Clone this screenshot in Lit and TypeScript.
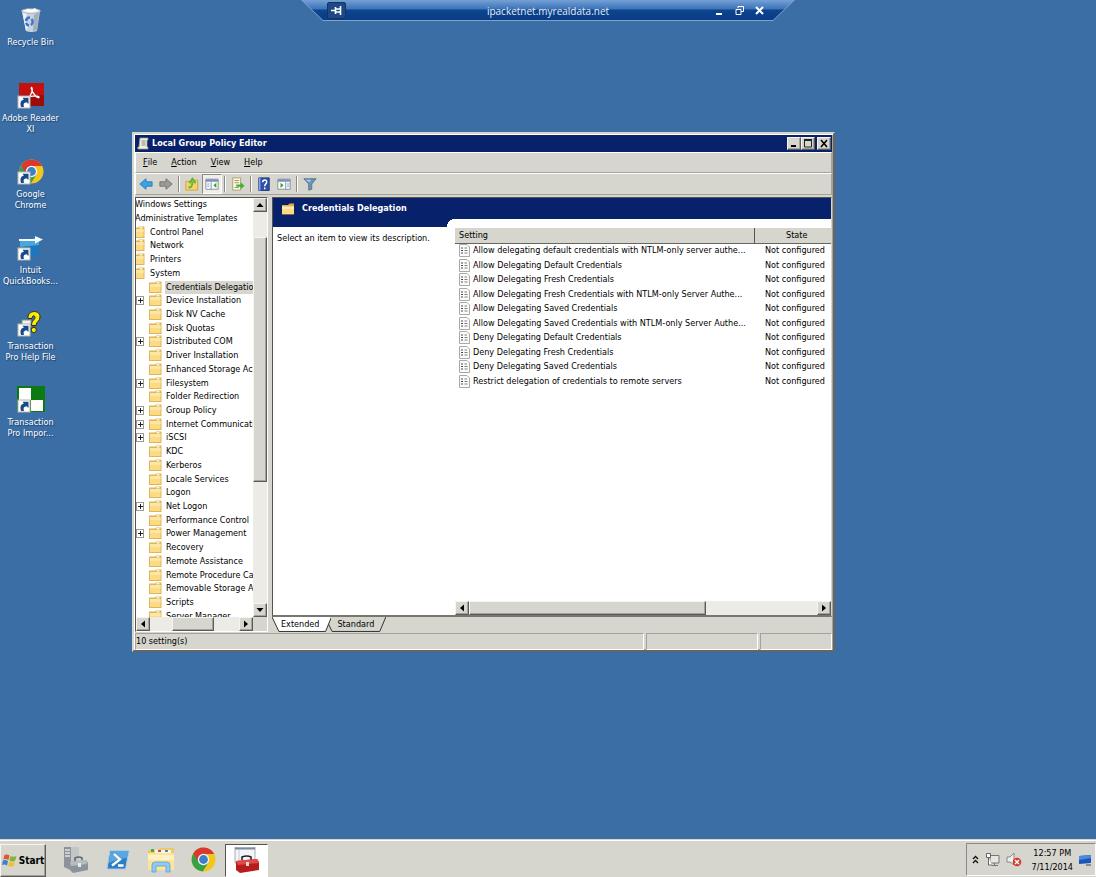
import { LitElement, html, svg, css, nothing } from "lit";
import { customElement, property, state } from "lit/decorators.js";
import { classMap } from "lit/directives/class-map.js";

const resets = css`
  * { box-sizing: border-box; }
  button {
    font: inherit; color: inherit; margin: 0; padding: 0; border: 0;
    background: none; display: flex; align-items: center; justify-content: center;
  }
  ul { list-style: none; margin: 0; padding: 0; }
  svg { display: block; }
`;

const bevel = css`
  .raised {
    background: #d6d5ce;
    border: 1px solid;
    border-color: #f4f4f0 #5c5b58 #5c5b58 #f4f4f0;
    box-shadow: inset -1px -1px #a3a29c;
  }
`;

const shortcutArrow = svg`
  <rect x="0" y="13" width="12" height="12" fill="#fff" stroke="#b9b4ac" stroke-width="1"/>
  <path d="M3 24C1.500 19 3.500 16.800 6 16.800L4.500 14.800H10.500V21L8.600 19.300C6 19.500 5 21 6 24Z" fill="#174a8c"/>`;

const chromeMark = svg`
  <circle cx="12.5" cy="12.5" r="12" fill="#f4c61d"/>
  <path d="M12.5 12.5L2.2 6.5A12 12 0 0 0 11.8 24.5L17.5 15.5Z" fill="#35a24a"/>
  <path d="M2.2 6.5A12 12 0 0 1 23.2 7H12.5L7.6 15.2Z" fill="#d9392f"/>
  <circle cx="12.5" cy="12.5" r="5.7" fill="#f5f5f2"/>
  <circle cx="12.5" cy="12.5" r="4.4" fill="#3f7fc9"/>`;

const folderIcon = html`<svg width="13" height="13" viewBox="0 0 13 13" aria-hidden="true">
  <path d="M0 1.500H6L7 .5H12.500V12H0Z" fill="#dfb558"/>
  <path d="M1 3H11.500V11H1Z" fill="#fbdc84"/>
  <path d="M1 3H11.500V6H1Z" fill="#fde7a2"/>
  <rect x="7.500" y="1" width="3" height="1.500" fill="#fff6d8"/>
</svg>`;

const bigFolder = html`<svg width="14" height="12" viewBox="0 0 14 12" aria-hidden="true">
  <path d="M1 2H7L8.500 .5H13V11.500H1Z" fill="#dcae4a"/>
  <path d="M1 3.500H13V11H1Z" fill="#fbdb80"/><path d="M1 3.500H13V6H1Z" fill="#fdeab0"/>
</svg>`;

const settingIcon = html`<svg width="11" height="13" viewBox="0 0 11 13" aria-hidden="true">
  <path d="M.5 .5H8L10.500 3V12.500H.5Z" fill="#fbfbfb" stroke="#a9a9a6"/>
  <path d="M2 4H4M2 6.500H4M2 9H4" stroke="#444a55" stroke-width="1.2"/>
  <path d="M5.500 4H8M5.500 6.500H8.500M5.500 9H8.500" stroke="#7d7d7d"/>
</svg>`;

const deskIcons: Record<string, unknown> = {
  bin: svg`
    <path d="M4 4L22 4L19 24Q13 26 8 24Z" fill="#c9d3dc"/>
    <path d="M4 4L9 7L7 14L10 20L8 24Z" fill="#eef2f5"/>
    <path d="M16 8L21 5L19 23L15 24Z" fill="#a3b0bc"/>
    <ellipse cx="13" cy="4" rx="9.500" ry="2.300" fill="#e7edf1" stroke="#98a6b2" stroke-width=".8"/>
    <path d="M6 4L10 1.500L13 3L17 1L20 4L13 5.500Z" fill="#fff"/>
    <path d="M8 14A4 4 0 0 1 12 10.500M13.500 12A4 4 0 0 1 13 18M11 18.500A4 4 0 0 1 8 16" fill="none" stroke="#3a76d0" stroke-width="2.400"/>`,
  adobe: svg`
    <rect x="1" y="0" width="25" height="23" fill="#c4110f"/>
    <rect x="1" y="12" width="25" height="11" fill="#9d0b0b"/>
    <path d="M13 4.500C15 4 14.300 9 12.500 12S8.500 17.500 8.500 15.500S20.500 11.500 21 14S14.500 12 13 4.500" fill="none" stroke="#fff" stroke-width="1.3"/>
    ${shortcutArrow}`,
  chrome: svg`<g transform="translate(1 0)">${chromeMark}</g>${shortcutArrow}`,
  quick: svg`
    <path d="M2 5L21 3V20L9 24L2 22Z" fill="#1c78bd"/>
    <path d="M2 5L21 3V10L2 12Z" fill="#4ba6dd"/>
    <path d="M1 4H17V1L25 4.500L17 8.500V6H1Z" fill="#f8fcff"/>
    ${shortcutArrow}`,
  help: svg`
    <path d="M4 9H13V16H4Z" fill="#f2f2ee" stroke="#8c8c88"/>
    <path d="M10 7.500C9 -1.500 22.500 -1.500 22 6C22 10.500 18 10.500 18 14.500H13.500C13.500 9.500 17 9 17 6.500C17 4 14 4 14 7.500Z" fill="#fbe90a" stroke="#2d2b12"/>
    <circle cx="15.800" cy="19" r="2.600" fill="#fbe90a" stroke="#2d2b12"/>
    ${shortcutArrow}`,
  transfer: svg`
    <rect x="-1" y="-1" width="28" height="26" fill="#0c7a12"/>
    <rect x="1" y="1" width="12" height="12" fill="#fff"/>
    <rect x="13" y="13" width="12" height="11" fill="#fff"/>
    ${shortcutArrow}`,
};

const shortcuts: Array<[string, string[]]> = [
  ["bin", ["Recycle Bin"]],
  ["adobe", ["Adobe Reader", "XI"]],
  ["chrome", ["Google", "Chrome"]],
  ["quick", ["Intuit", "QuickBooks..."]],
  ["help", ["Transaction", "Pro Help File"]],
  ["transfer", ["Transaction", "Pro Impor..."]],
];

@customElement("desktop-shortcuts")
class DesktopShortcuts extends LitElement {
  static styles = [resets, css`
    :host { display: block; color: #fff; width: 61px; }
    .list { display: grid; grid-auto-rows: 76px; padding-top: 7px; }
    .shortcut { display: flex; flex-direction: column; align-items: center; gap: 5px; width: 100%; justify-content: flex-start; text-align: center; }
    .label { line-height: 11px; white-space: nowrap; text-shadow: 1px 1px 1px #1d3f68; }
    .line { display: block; }
    .pic { overflow: visible; }
  `];
  render() {
    return html`<ul class="list">${shortcuts.map(([icon, lines]) => html`
      <li><button class="shortcut">
        <svg class="pic" width="25" height="25" viewBox="0 0 25 25" aria-hidden="true">${deskIcons[icon]}</svg>
        <span class="label">${lines.map((l) => html`<span class="line">${l}</span>`)}</span>
      </button></li>`)}</ul>`;
  }
}

@customElement("connection-bar")
class ConnectionBar extends LitElement {
  static styles = [resets, css`
    :host { display: block; color: #e4edf8; }
    .rim {
      background: #7fa3cc; padding-bottom: 1px;
      clip-path: polygon(0 0, 100% 0, calc(100% - 22px) 100%, 22px 100%);
    }
    .bar {
      height: 20px; padding: 0 26px;
      display: grid; grid-template-columns: 1fr auto 1fr; align-items: center;
      clip-path: polygon(1px 0, calc(100% - 1px) 0, calc(100% - 22px) 100%, 22px 100%);
      background: linear-gradient(#74a0d6, #3c73b8 45%, #0c458f 50%, #0a3c84);
    }
    .pin { width: 19px; height: 17px; background: #1d4a85; border: 1px solid #15345f; border-radius: 2px; }
    .name { font: 10px/14px "Open Sans", "Noto Sans", sans-serif; padding-top: 2px; }
    .controls { display: flex; justify-content: flex-end; gap: 9px; padding-right: 4px; }
    .ctl { width: 11px; height: 12px; }
  `];
  render() {
    return html`<div class="rim"><div class="bar">
      <button class="pin" aria-label="Pin"><svg width="11" height="9" viewBox="0 0 11 9"><path d="M0 4.500H4M4.500 1V8M4.500 3H9M4.500 6H9M9.500 0V9" stroke="#fff" stroke-width="1.600" fill="none"/></svg></button>
      <span class="name">ipacketnet.myrealdata.net</span>
      <div class="controls">
        <button class="ctl" aria-label="Minimize"><svg width="11" height="11" viewBox="0 0 11 11"><path d="M2 9H8" stroke="#fff" stroke-width="2"/></svg></button>
        <button class="ctl" aria-label="Restore"><svg width="11" height="11" viewBox="0 0 11 11"><path d="M4 3V1.500H9.500V6.500H7M2 4.500H7V9.500H2Z" stroke="#fff" fill="none"/></svg></button>
        <button class="ctl" aria-label="Close"><svg width="11" height="11" viewBox="0 0 11 11"><path d="M2 2L9 9M9 2L2 9" stroke="#fff" stroke-width="2"/></svg></button>
      </div>
    </div></div>`;
  }
}

@customElement("scroll-bar")
class ScrollBar extends LitElement {
  @property({ reflect: true }) direction: "vertical" | "horizontal" = "vertical";
  @property({ type: Number }) start = 0;
  @property({ type: Number }) size = 50;
  static styles = [resets, bevel, css`
    :host { display: flex; background: #ecebe6; color: #000; }
    :host([direction="vertical"]) { flex-direction: column; width: 14px; }
    :host([direction="horizontal"]) { height: 14px; }
    .arrow { width: 14px; height: 14px; flex: none; }
    .track { flex: 1; display: flex; flex-direction: inherit; min-width: 0; min-height: 0; }
    .thumb { flex: none; }
  `];
  render() {
    const v = this.direction === "vertical";
    const side = v ? "height" : "width";
    return html`
      <button class="arrow raised" aria-label=${v ? "Scroll up" : "Scroll left"}>
        <svg width="8" height="8" viewBox="0 0 8 8"><path d=${v ? "M0.500 6L4 2L7.500 6Z" : "M6 0.500L2 4L6 7.500Z"}/></svg></button>
      <div class="track">
        <div style="${side}:${this.start}%"></div>
        <div class="thumb raised" style="${side}:${this.size}%"></div>
      </div>
      <button class="arrow raised" aria-label=${v ? "Scroll down" : "Scroll right"}>
        <svg width="8" height="8" viewBox="0 0 8 8"><path d=${v ? "M0.500 2L4 6L7.500 2Z" : "M2 0.500L6 4L2 7.500Z"}/></svg></button>`;
  }
}

type Node = { name: string; level: number; plus?: boolean };
const tree: Node[] = [
  ...["Windows Settings", "Administrative Templates"].map((name) => ({ name, level: 0 })),
  ...["Control Panel", "Network", "Printers", "System"].map((name) => ({ name, level: 1 })),
  ...[
    "Credentials Delegation", "+Device Installation", "Disk NV Cache", "Disk Quotas", "+Distributed COM",
    "Driver Installation", "Enhanced Storage Access", "+Filesystem", "Folder Redirection", "+Group Policy",
    "+Internet Communication", "+iSCSI", "KDC", "Kerberos", "Locale Services", "Logon",
    "+Net Logon", "Performance Control", "+Power Management", "Recovery", "Remote Assistance",
    "Remote Procedure Call", "Removable Storage Access", "Scripts", "Server Manager",
  ].map((n) => ({ name: n.replace("+", ""), level: 2, plus: n.startsWith("+") })),
];

@customElement("policy-tree")
class PolicyTree extends LitElement {
  @state() private selected = "Credentials Delegation";
  static styles = [resets, css`
    :host {
      display: grid; grid-template-columns: minmax(0, 1fr) auto; grid-template-rows: minmax(0, 1fr) auto;
      background: #d6d5ce; border: 1px solid; border-color: #55544f #fff #fff #55544f;
    }
    .view { overflow: hidden; background: #fff; contain: size; }
    .nodes { display: grid; grid-auto-rows: 1fr; height: 425px; }
    .node { display: flex; align-items: center; white-space: nowrap; min-height: 0; }
    .level0 .text { margin-left: -2px; }
    .level1 .icon { margin-left: -4px; }
    .text { padding: 0 1px; line-height: 13px; justify-content: flex-start; flex: none; }
    .selected { background: #d6d5ce; flex: 1 0 auto; }
    .icon { width: 13px; flex: none; margin-right: 4px; }
    .level2 .icon { margin-left: 5px; margin-right: 3px; }
    .box { width: 8px; height: 9px; flex: none; }
    .expander { border: 1px solid #9a9a98; background: #fff; }
  `];
  render() {
    return html`
      <div class="view"><ul class="nodes" role="tree">${tree.map((n) => html`
        <li class="node level${n.level}" role="treeitem">
          ${n.level === 2 ? n.plus
            ? html`<button class="box expander" aria-label="Expand ${n.name}"><svg width="5" height="5" viewBox="0 0 5 5"><path d="M0 2.500H5M2.500 0V5" stroke="#222"/></svg></button>`
            : html`<span class="box"></span>` : nothing}
          ${n.level ? html`<span class="icon">${folderIcon}</span>` : nothing}
          <button class=${classMap({ text: true, selected: n.name === this.selected })}
            @click=${() => (this.selected = n.name)}>${n.name}</button>
        </li>`)}</ul></div>
      <scroll-bar direction="vertical" start="6.500" size="62.500"></scroll-bar>
      <scroll-bar direction="horizontal" start="25" size="47"></scroll-bar>`;
  }
}

const settings = [
  "Allow delegating default credentials with NTLM-only server authe...",
  "Allow Delegating Default Credentials",
  "Allow Delegating Fresh Credentials",
  "Allow Delegating Fresh Credentials with NTLM-only Server Authe...",
  "Allow Delegating Saved Credentials",
  "Allow Delegating Saved Credentials with NTLM-only Server Authe...",
  "Deny Delegating Default Credentials",
  "Deny Delegating Fresh Credentials",
  "Deny Delegating Saved Credentials",
  "Restrict delegation of credentials to remote servers",
];

@customElement("policy-details")
class PolicyDetails extends LitElement {
  @state() private tab = "Extended";
  static styles = [resets, css`
    :host { display: flex; flex-direction: column; min-width: 0; }
    .pane {
      flex: 1; min-height: 0; background: #fff; display: grid;
      grid-template-columns: 182px minmax(0, 1fr); grid-template-rows: 21px auto minmax(0, 1fr);
      border: 1px solid; border-color: #55544f #d6d5ce #77766f #55544f;
      border-bottom-width: 2px;
    }
    .banner { grid-column: 1 / 3; background: #08216b; color: #fff; display: flex; align-items: center; gap: 7px; padding-left: 8px; }
    .heading { margin: 0; font-size: inherit; font-weight: bold; }
    .corner { grid-column: 1; grid-row: 2; height: 8px; margin-right: 8px; background: #08216b; }
    .cornerfit { grid-column: 1; grid-row: 2; justify-self: end; width: 8px; height: 8px; background: radial-gradient(circle at 100% 100%, #fff 8px, #08216b 8px); }
    .intro { grid-column: 1; grid-row: 3; margin: 0; padding: 5px 4px; line-height: 13px; white-space: nowrap; }
    .list { grid-column: 2; grid-row: 2 / 4; padding-top: 9px; display: flex; flex-direction: column; justify-content: space-between; min-width: 0; }
    .table { border-collapse: collapse; table-layout: fixed; width: 100%; }
    .wide { width: 299px; }
    .head {
      height: 15px; padding: 1px 4px 0; background: #d6d5ce; font-weight: normal; text-align: left; line-height: 13px;
      border-bottom: 1px solid #66655f; border-right: 1px solid #55544f;
    }
    .head:last-child { text-align: center; border-right: 0; padding-left: 12px; }
    .row { height: 14px; }
    .row:nth-child(odd) { height: 15px; }
    .cell { padding: 0; white-space: nowrap; line-height: 13px; }
    .cell:last-child { padding-left: 11px; }
    .name { display: flex; align-items: center; gap: 3px; padding-left: 4px; }
    .tabs { display: flex; height: 15px; align-items: flex-start; }
    .tab { position: relative; height: 15px; padding: 0 12px 0 9px; }
    .tab + .tab { margin-left: -6px; padding: 0 12px; }
    .shape { position: absolute; inset: 0; width: 100%; height: 100%; }
    .tab .shape { fill: #d6d5ce; stroke: #333; }
    .current .shape { fill: #fff; }
    .current { z-index: 1; }
    .word { position: relative; }
  `];
  render() {
    return html`
      <div class="pane">
        <div class="banner">${bigFolder}<h2 class="heading">Credentials Delegation</h2></div>
        <div class="corner"></div><div class="cornerfit"></div>
        <p class="intro">Select an item to view its description.</p>
        <div class="list">
          <table class="table">
            <colgroup><col class="wide"><col></colgroup>
            <thead><tr><th class="head" scope="col">Setting</th><th class="head" scope="col">State</th></tr></thead>
            <tbody>${settings.map((s) => html`<tr class="row">
              <td class="cell"><span class="name">${settingIcon}${s}</span></td><td class="cell">Not configured</td></tr>`)}</tbody>
          </table>
          <scroll-bar direction="horizontal" start="0" size="68"></scroll-bar>
        </div>
      </div>
      <div class="tabs" role="tablist">${["Extended", "Standard"].map((t) => html`
        <button role="tab" class=${classMap({ tab: true, current: t === this.tab })} @click=${() => (this.tab = t)}>
          <svg class="shape" viewBox="0 0 60 14" preserveAspectRatio="none"><path d="M0 0L7 13.500H54L60 0" vector-effect="non-scaling-stroke"/></svg>
          <span class="word">${t}</span></button>`)}</div>`;
  }
}

const tools: Array<{ label: string; art?: unknown; on?: boolean }> = [
  { label: "Back", art: svg`<path d="M1 8L8 2V5.500H15V10.500H8V14Z" fill="#35a5e8" stroke="#2878b8"/>` },
  { label: "Forward", art: svg`<path d="M15 8L8 2V5.500H1V10.500H8V14Z" fill="#9b9b98" stroke="#6f6f6c"/>` },
  { label: "" },
  { label: "Up one level", art: svg`<path d="M1 5H7L8 3.500H14.500V15H1Z" fill="#f5d36c" stroke="#c9a044"/><path d="M4 12C8 12 8.500 9 8.500 5M5 7L8.500 2L12 7" stroke="#5fb92f" stroke-width="2.200" fill="none"/>` },
  { label: "Show tree", on: true, art: svg`<path d="M1 2.500H15V14H1Z" fill="#fff" stroke="#7d8897"/><path d="M1 4H15" stroke="#7f95b8" stroke-width="3"/><path d="M7 6V14M2.500 8H5M2.500 10.500H5" stroke="#6b86b4"/><path d="M13 6.500V12.500L9.500 9.500Z" fill="#35a22c"/>` },
  { label: "" },
  { label: "Export list", art: svg`<path d="M2 1H11V15H2Z" fill="#fdf6d2" stroke="#a49b76"/><path d="M4 4H9M4 6.500H9M4 12H9" stroke="#8b8b80"/><path d="M6 8.500H11V6L15.500 10L11 14V11H6Z" fill="#43b338"/>` },
  { label: "" },
  { label: "Help", art: svg`<path d="M2 1H14V15.500H2Z" fill="#2d4fa8" stroke="#1c3278"/><path d="M2 1H4V15.500H2Z" fill="#8ba4dd"/><path d="M6.500 6C6.500 2.500 11.500 2.500 11 6C11 8 8.800 8 8.800 10.500M8.800 12V14" stroke="#fff" stroke-width="1.700" fill="none"/>` },
  { label: "Properties", art: svg`<path d="M1 2.500H15V14H1Z" fill="#fff" stroke="#7d8897"/><path d="M1 4H15" stroke="#7f95b8" stroke-width="3"/><path d="M10 6V14M11.500 8H14M11.500 10.500H14" stroke="#6b86b4"/><path d="M4 6.500V12.500L7.500 9.500Z" fill="#35a22c"/>` },
  { label: "" },
  { label: "Filter", art: svg`<path d="M1 2H15L10 8V14L6.500 15V8Z" fill="#6d93b4" stroke="#4f7290"/><path d="M3 3H9L7.500 6Z" fill="#b4cee0"/>` },
];

@customElement("policy-window")
class PolicyWindow extends LitElement {
  static styles = [resets, bevel, css`
    :host {
      display: flex; flex-direction: column; background: #d6d5ce; padding: 1px;
      border: 2px solid; border-color: #d6d5ce #66655f #66655f #d6d5ce;
      box-shadow: inset 1px 1px #fff, inset -1px -1px #a3a29c;
    }
    .title { display: flex; align-items: center; gap: 3px; height: 17px; background: #08216b; color: #fff; padding: 0 1px 0 2px; }
    .name { flex: 1; margin: 0; font-size: inherit; }
    .controls { display: flex; }
    .ctl { width: 14px; height: 13px; color: #000; }
    .ctl:last-child { margin-left: 2px; }
    .menu { display: flex; gap: 14px; height: 21px; padding: 0 7px; border: 1px solid; border-color: #fff #a3a29c #a3a29c #fff; }
    .tools { display: flex; align-items: center; height: 22px; border: 1px solid; border-color: #fff #a3a29c #a3a29c #fff; }
    .tool { width: 20px; height: 20px; }
    .pressed { background: #efeeea; border: 1px solid; border-color: #8b8a84 #fff #fff #8b8a84; }
    .rule { width: 2px; height: 16px; margin: 0 2px; border-left: 1px solid #8b8a84; border-right: 1px solid #fff; }
    .body { display: grid; grid-template-columns: 133px minmax(0, 1fr); gap: 4px; flex: 1; min-height: 0; padding-top: 2px; }
    .status { display: grid; grid-template-columns: minmax(0, 1fr) 112px 72px; gap: 2px; height: 17px; padding-top: 1px; }
    .field { border: 1px solid; border-color: #a3a29c #fff #fff #a3a29c; line-height: 15px; }
  `];
  render() {
    return html`
      <div class="title">
        <svg width="12" height="13" viewBox="0 0 12 13" aria-hidden="true"><path d="M3 1H11V3H10V10H11V12H2Q0 12 1 10H2Z" fill="#f3efdc" stroke="#a39f8c" stroke-width=".8"/><path d="M4.500 4H8.500M4.500 6H8.500M4.500 8H8.500" stroke="#7b8794"/></svg>
        <h1 class="name">Local Group Policy Editor</h1>
        <div class="controls">
          <button class="ctl raised" aria-label="Minimize"><svg width="10" height="9" viewBox="0 0 10 9"><path d="M2 7H7" stroke="#000" stroke-width="2"/></svg></button>
          <button class="ctl raised" aria-label="Maximize"><svg width="10" height="9" viewBox="0 0 10 9"><path d="M1.500 1.500H8.500V8H1.500Z" fill="none" stroke="#222"/><path d="M1 1H9" stroke="#222" stroke-width="2"/></svg></button>
          <button class="ctl raised" aria-label="Close"><svg width="10" height="9" viewBox="0 0 10 9"><path d="M2 1L8 8M8 1L2 8" stroke="#000" stroke-width="1.600"/></svg></button>
        </div>
      </div>
      <nav class="menu">${["File", "Action", "View", "Help"].map((m) => html`<button><u>${m[0]}</u>${m.slice(1)}</button>`)}</nav>
      <div class="tools" role="toolbar">${tools.map((t) => t.art
        ? html`<button class=${classMap({ tool: true, pressed: !!t.on })} aria-label=${t.label}><svg width="14" height="14" viewBox="0 0 16 16">${t.art}</svg></button>`
        : html`<span class="rule"></span>`)}</div>
      <div class="body"><policy-tree></policy-tree><policy-details></policy-details></div>
      <footer class="status"><div class="field">10 setting(s)</div><div class="field"></div><div class="field"></div></footer>`;
  }
}

const taskIcons: Array<[string, unknown]> = [
  ["Server Manager", svg`<path d="M2 0H17V20L10 25L2 20Z" fill="#c3c6c9"/><path d="M2 0H9V23L2 20Z" fill="#8d9399"/><path d="M3 3H8M3 6H8M3 9H8" stroke="#dfe2e4" stroke-width="1.500"/><path d="M8 15L24 13L26 16V23L11 26L8 23Z" fill="#8c949b"/><path d="M8 15L24 13L25 17L9 19Z" fill="#b5bcc2"/><path d="M13 14V11Q17 9 20 11V13" fill="none" stroke="#5f676e" stroke-width="1.600"/><rect x="16" y="16" width="3" height="4" fill="#e9ecee"/>`],
  ["PowerShell", svg`<path d="M5 3.500H24L20.500 22H2Z" fill="#2d7fc3" stroke="#a9cdea" stroke-linejoin="round"/><path d="M5.500 4H23.500L22 11Q12 12 4 16Z" fill="#5ba6df"/><path d="M9 7L15 12.500L7 18.500M13 18.500H18.500" stroke="#fff" stroke-width="2.300" fill="none"/>`],
  ["Explorer", svg`<path d="M0 3H10L12 1H26V23H0Z" fill="#ecc964"/><path d="M0 6H26V23H0Z" fill="#fae59a"/><path d="M3 2H6V5H3Z" fill="#5aa545"/><path d="M7 3H23V6H7Z" fill="#f7f5e8"/><path d="M10 3H13V5H10Z" fill="#c54a39"/><path d="M17 3H20V5H17Z" fill="#4a82c4"/><path d="M0 8H26V13H0Z" fill="#fdf2c2"/><path d="M4 25V18Q4 15 7 15H19Q22 15 22 18V25H18V19H8V25Z" fill="#8fcaf0" stroke="#5c9fd0" stroke-width=".8"/>`],
  ["Google Chrome", chromeMark],
  ["Policy Editor", svg`<path d="M1 0H21V16H1Z" fill="#f4f5f8" stroke="#a9adb7"/><path d="M1 1.500H21" stroke="#7e8a9c" stroke-width="2"/><path d="M5 3V14" stroke="#c9cdd6"/><path d="M2 14L23 12L25 15V23L6 26L2 23Z" fill="#b81c1c"/><path d="M2 14L23 12L25 16L4 18Z" fill="#de4a44"/><path d="M8 13V10Q13 8 17 10V12.500" fill="none" stroke="#2d2020" stroke-width="1.600"/><rect x="12" y="15" width="3" height="4" fill="#f0dada"/>`],
];

@customElement("task-bar")
class TaskBar extends LitElement {
  static styles = [resets, bevel, css`
    :host { display: flex; justify-content: space-between; background: #d6d5ce; height: 38px; border-top: 1px solid #d6d5ce; box-shadow: inset 0 1px #fff; padding-top: 3px; }
    .apps { display: flex; align-items: center; }
    .start { width: 46px; height: 33px; gap: 1px; font-weight: bold; font-size: 10px; margin-right: 7px; }
    .app { width: 43px; height: 33px; }
    .active { background: #fff; border: 1px solid; border-color: #55544f #fff #fff #55544f; }
    .tray { display: flex; align-items: center; gap: 6px; height: 33px; border: 1px solid; border-color: #8b8a84 #fff #fff #8b8a84; padding: 0 3px 0 5px; }
    .clock { line-height: 14px; text-align: center; padding: 0 0 0 3px; }
    .line { display: block; }
  `];
  render() {
    return html`
      <div class="apps">
        <button class="start raised"><svg width="16" height="15" viewBox="0 0 16 15"><path d="M2.500 2Q5 1 7.500 2.500L6.500 7Q4 5.500 1.300 6.500Z" fill="#e2562a"/><path d="M8.500 3Q11 4.500 14.500 3L13 8Q10 9 7.500 7.500Z" fill="#7fb53a"/><path d="M1 7.500Q3.500 6.500 6 8L5 12.500Q2.500 11 0 12Z" fill="#3f7fd0"/><path d="M7.200 8.500Q10 10 12.700 9L11.500 13Q9 14.500 6 13Z" fill="#f3bf2b"/></svg>Start</button>
        ${taskIcons.map(([label, art], i) => html`<button class=${classMap({ app: true, active: i === 4 })} aria-label=${label}>
          <svg width="26" height="26" viewBox="0 0 26 26">${art}</svg></button>`)}
      </div>
      <div class="tray">
        <button aria-label="Show hidden icons"><svg width="7" height="9" viewBox="0 0 7 9"><path d="M1 4L3.500 1.500L6 4M1 8L3.500 5.500L6 8" fill="none" stroke="#111" stroke-width="1.300"/></svg></button>
        <button aria-label="Network"><svg width="15" height="15" viewBox="0 0 15 15"><path d="M5 3.500H14V11H5Z" fill="#e6e6e2" stroke="#777"/><path d="M7 13.500H13M9.500 11V13.500" stroke="#777"/><path d="M1.500 1.500H5.500V5.500H1.500ZM3.500 5.500V13H7" fill="#fff" stroke="#666"/></svg></button>
        <button aria-label="Volume muted"><svg width="16" height="15" viewBox="0 0 16 15"><path d="M1 5H4L8 1V13L4 10H1Z" fill="#f0f0ee" stroke="#8a8a88"/><circle cx="11" cy="10" r="4.300" fill="#d63a2c"/><path d="M9 8L13 12M13 8L9 12" stroke="#fff" stroke-width="1.500"/></svg></button>
        <span class="clock"><span class="line">12:57 PM</span><span class="line">7/11/2014</span></span>
        <button aria-label="Show desktop"><svg width="13" height="12" viewBox="0 0 13 12"><path d="M0 2L12 1V9L0 10Z" fill="#1c57b5"/><path d="M0 2L12 1V4L0 6Z" fill="#4a8be0"/><path d="M7 11H12" stroke="#3c4658"/></svg></button>
      </div>`;
  }
}

@customElement("app-root")
class AppRoot extends LitElement {
  static styles = [resets, css`
    :host {
      display: flex; flex-direction: column; min-height: 100vh; position: relative;
      background: #3a6ea5; color: #000; font: 9px/13px "DejaVu Sans Condensed", "DejaVu Sans", sans-serif;
    }
    .desk { flex: 1; }
    .connection { position: absolute; top: 0; left: calc(50% - 247px); width: 494px; }
    .editor { position: absolute; top: 132px; left: 132px; width: 703px; height: 520px; }
  `];
  render() {
    return html`
      <main class="desk"><desktop-shortcuts></desktop-shortcuts></main>
      <connection-bar class="connection"></connection-bar>
      <policy-window class="editor"></policy-window>
      <task-bar></task-bar>`;
  }
}
